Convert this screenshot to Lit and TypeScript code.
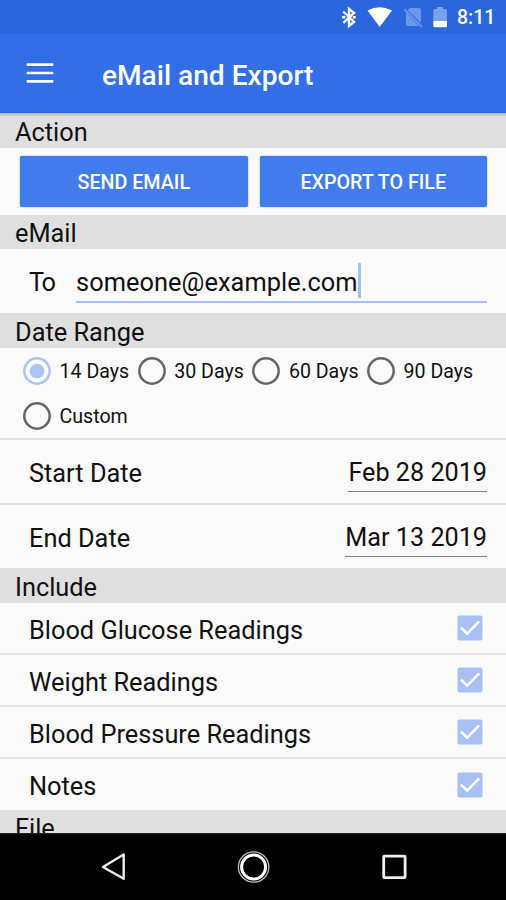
import { LitElement, html, css, svg } from "lit";
import { customElement } from "lit/decorators.js";

@customElement("app-root")
export class AppRoot extends LitElement {
  static styles = css`
    :host {
      display: flex;
      flex-direction: column;
      width: 506px;
      height: 900px;
      overflow: hidden;
      background: #fafafa;
      color: #111;
      font-family: Roboto, "Liberation Sans", sans-serif;
      font-size: 25.35px;
      line-height: 30px;
    }
    * { box-sizing: border-box; }
    svg { display: block; flex: none; }
    .status {
      flex: none;
      height: 34px;
      background: #2a66dd;
      color: #fff;
      display: flex;
      align-items: flex-start;
      justify-content: flex-end;
      padding: 0 11px 0 0;
    }
    .clock { font-size: 19.5px; font-weight: 500; line-height: 34px; width: 38px; white-space: nowrap; padding-top: 1px; }
    .appbar {
      flex: none;
      height: 79px;
      background: #326ee8;
      color: #fff;
      display: flex;
      align-items: center;
      padding: 0 0 0 26px;
      border-bottom: 1px solid #2563d8;
      gap: 48px;
    }
    .title { font-size: 28.1px; font-weight: 500; padding-top: 6px; white-space: nowrap; }
    .body { flex: 1; min-height: 0; overflow: hidden; }
    .section {
      height: 35px;
      background: #dfdfdf;
      padding: 4px 0 0 15px;
      white-space: nowrap;
    }
    .section.short { height: 34px; padding-top: 3px; }
    .section.file { padding-top: 3px; }
    .first { background: linear-gradient(#bdb8b0, #dfdfdf 4px); }
    .buttons { display: flex; gap: 12px; height: 67px; padding: 8px 19px 0 20px; }
    .btn {
      flex: 1;
      height: 51px;
      border-radius: 2px;
      background: #427beb;
      box-shadow: 0 0 1.5px #5d8fee;
      color: #fff;
      font-size: 19.7px;
      font-weight: 500;
      display: flex;
      align-items: center;
      justify-content: center;
      padding-top: 3px;
    }
    .to { height: 64px; display: flex; padding: 0 19px 0 29px; align-items: flex-start; }
    .tolabel { width: 47px; padding-top: 18px; letter-spacing: -1.3px; }
    .field {
      flex: 1;
      height: 54px;
      padding-top: 14px;
      border-bottom: 2px solid #a7c0f2;
      display: flex;
    }
    .email { padding-top: 4px; letter-spacing: 0.07px; }
    .caret { width: 3px; height: 35px; background: #a7c0f2; }
    .radios {
      height: 92px;
      display: grid;
      grid-template-columns: repeat(4, 114.7px);
      grid-template-rows: 45px 45px;
      padding-left: 22px;
      border-bottom: 2px solid #dfdfdf;
    }
    .radio { display: flex; align-items: center; gap: 7.5px; font-size: 19.6px; white-space: nowrap; }
    .rlabel { padding-top: 3px; }
    .row {
      display: flex;
      justify-content: space-between;
      align-items: flex-start;
      padding: 0 19px 0 29px;
      white-space: nowrap;
    }
    .date { height: 63px; }
    .date.lined { height: 65px; border-bottom: 2px solid #dfdfdf; }
    .dlabel { padding-top: 18px; }
    .value { padding-top: 18px; height: 52px; border-bottom: 1px solid #808080; font-size: 25.2px; }
    .check { height: 52px; align-items: center; padding-right: 23px; border-bottom: 2px solid #e2e2e2; }
    .check.last { height: 51px; border-bottom: 0; }
    .clabel { padding-top: 3px; }
    .nav { flex: none; height: 67px; background: #000; display: block; border-top: 1px solid #222; }
  `;

  private radio(label: string, on = false) {
    const c = on ? "#abc3f6" : "#666";
    return html`<div class="radio">
      <svg width="30" height="30" viewBox="0 0 30 30">
        <circle cx="15" cy="15" r="12.7" fill="none" stroke=${c} stroke-width="2.5" />
        ${on ? svg`<circle cx="15" cy="15" r="7.3" fill=${c} />` : ""}
      </svg>
      <span class="rlabel">${label}</span>
    </div>`;
  }

  private check(label: string, last = false) {
    return html`<div class="row check ${last ? "last" : ""}">
      <span class="clabel">${label}</span>
      <svg width="26" height="26" viewBox="0 0 26 26">
        <rect x="0.5" y="0.5" width="25" height="25" rx="2" fill="#a8c0f5" />
        <path d="M4 12.6 L10.2 18.6 L22.2 6.4" fill="none" stroke="#fff" stroke-width="2.6" />
      </svg>
    </div>`;
  }

  render() {
    return html`
      <div class="status">
        <svg width="119" height="34" viewBox="338 0 119 34">
          <path d="M343.3 11.5 L354 22 L349 26 V9 L354 12.8 L343.3 23" fill="none" stroke="#fff" stroke-width="2.4" />
          <path d="M342 17.3 h3.4 M352.8 17.3 h3" stroke="#fff" stroke-width="2.6" />
          <path d="M367.5 10.5 Q379.7 4 392 10.5 L379.7 27 Z" fill="#fff" />
          <path d="M410 8 H419 Q421 8 421 10 V23 L407.5 10.2 Z M406 12.5 L419 26 H408 Q406 26 406 24 Z" fill="#6c97ea" />
          <path d="M404.5 9.5 L422 27" stroke="#6c97ea" stroke-width="1.8" />
          <path d="M437 7 h6 v2 h2.5 q1.5 0 1.5 1.5 V21 H433.3 V10.5 q0 -1.5 1.5 -1.5 H437 Z" fill="#7ba1ec" />
          <path d="M433.3 21 H447 V26 q0 1.2 -1.3 1.2 H434.6 q-1.3 0 -1.3 -1.2 Z" fill="#fff" />
        </svg>
        <span class="clock">8:11</span>
      </div>
      <div class="appbar">
        <svg width="28" height="22" viewBox="0 0 28 22">
          <path d="M0.7 2.7 H27.3 M0.7 11 H27.3 M0.7 19.3 H27.3" stroke="#fff" stroke-width="2.7" />
        </svg>
        <span class="title">eMail and Export</span>
      </div>
      <div class="body">
        <div class="section first">Action</div>
        <div class="buttons">
          <div class="btn">SEND EMAIL</div>
          <div class="btn">EXPORT TO FILE</div>
        </div>
        <div class="section short">eMail</div>
        <div class="to">
          <span class="tolabel">To</span>
          <div class="field"><span class="email">someone@example.com</span><span class="caret"></span></div>
        </div>
        <div class="section">Date Range</div>
        <div class="radios">
          ${this.radio("14 Days", true)} ${this.radio("30 Days")} ${this.radio("60 Days")}
          ${this.radio("90 Days")} ${this.radio("Custom")}
        </div>
        <div class="row date lined"><span class="dlabel">Start Date</span><span class="value">Feb 28 2019</span></div>
        <div class="row date"><span class="dlabel">End Date</span><span class="value">Mar 13 2019</span></div>
        <div class="section">Include</div>
        ${this.check("Blood Glucose Readings")} ${this.check("Weight Readings")}
        ${this.check("Blood Pressure Readings")} ${this.check("Notes", true)}
        <div class="section file">File</div>
      </div>
      <div class="nav">
        <svg width="506" height="66" viewBox="0 834 506 66">
          <path d="M103 867 L123.7 854.5 V878.8 Z" fill="none" stroke="#eee" stroke-width="2.4" stroke-linejoin="round" />
          <circle cx="253.6" cy="867" r="15.2" fill="none" stroke="#bbb" stroke-width="1.3" />
          <circle cx="253.6" cy="867" r="12" fill="none" stroke="#fff" stroke-width="3" />
          <rect x="383.7" y="856.2" width="21.4" height="21.4" rx="0.8" fill="none" stroke="#eee" stroke-width="2.8" />
        </svg>
      </div>
    `;
  }
}
